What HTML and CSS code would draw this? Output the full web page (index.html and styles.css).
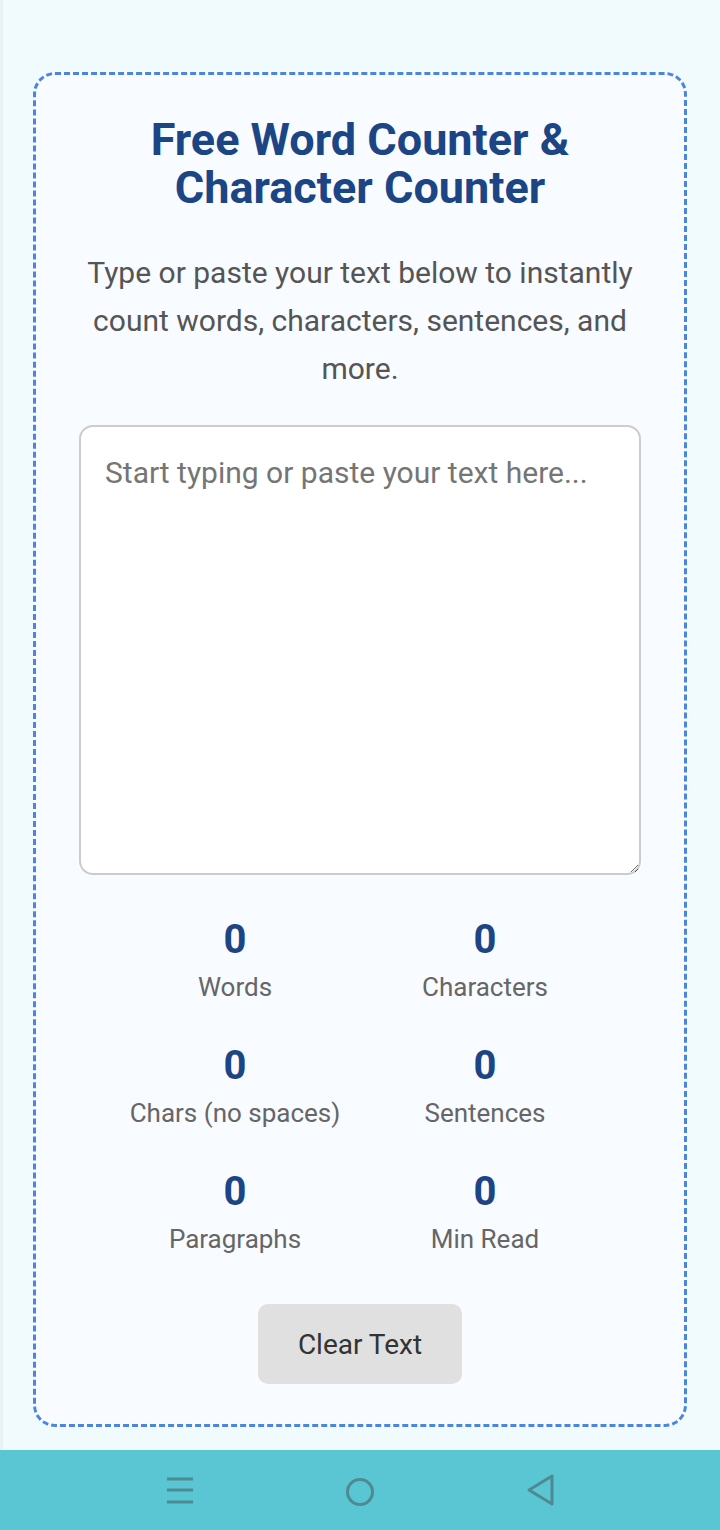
FILE: index.html
```html
<!DOCTYPE html>
<html lang="en">
<head>
  <meta charset="UTF-8">
  <title>Free Word Counter &amp; Character Counter</title>
  <meta name="viewport" content="width=device-width, initial-scale=1.0">
  <link rel="stylesheet" href="styles.css">
</head>
<body>

  <main class="page">
    <div class="counter-card">
      <h1>Free Word Counter &amp; Character Counter</h1>
      <p class="intro">Type or paste your text below to instantly count words, characters, sentences, and more.</p>

      <textarea id="textInput" placeholder="Start typing or paste your text here..."></textarea>

      <div class="stats">
        <div class="stat"><span class="stat-num" id="words">0</span><span class="stat-label">Words</span></div>
        <div class="stat"><span class="stat-num" id="chars">0</span><span class="stat-label">Characters</span></div>
        <div class="stat"><span class="stat-num" id="charsNoSpace">0</span><span class="stat-label">Chars (no spaces)</span></div>
        <div class="stat"><span class="stat-num" id="sentences">0</span><span class="stat-label">Sentences</span></div>
        <div class="stat"><span class="stat-num" id="paragraphs">0</span><span class="stat-label">Paragraphs</span></div>
        <div class="stat"><span class="stat-num" id="readTime">0</span><span class="stat-label">Min Read</span></div>
      </div>

      <button class="clear-btn" id="clearBtn">Clear Text</button>
    </div>
  </main>

  <nav class="sys-nav">
    <svg width="36" height="36" viewBox="0 0 36 36"><path d="M5 7h26M5 18h26M5 30h26" stroke="#4d8a91" stroke-width="3"/></svg>
    <svg width="36" height="36" viewBox="0 0 36 36"><circle cx="18" cy="20" r="12.5" fill="none" stroke="#4d8a91" stroke-width="3"/></svg>
    <svg width="36" height="36" viewBox="0 0 36 36"><path d="M30 4 L7 18 L30 32 Z" fill="none" stroke="#4d8a91" stroke-width="3" stroke-linejoin="round"/></svg>
  </nav>

  <script>
    const textInput = document.getElementById("textInput");

    function update() {
      const text = textInput.value;
      const words = text.trim() ? text.trim().split(/\s+/).length : 0;
      document.getElementById("words").textContent = words;
      document.getElementById("chars").textContent = text.length;
      document.getElementById("charsNoSpace").textContent = text.replace(/\s/g, "").length;
      document.getElementById("sentences").textContent = (text.match(/[^.!?]+[.!?]+/g) || []).length;
      document.getElementById("paragraphs").textContent = text.split(/\n+/).filter(p => p.trim()).length;
      document.getElementById("readTime").textContent = Math.ceil(words / 200);
    }

    textInput.addEventListener("input", update);
    document.getElementById("clearBtn").addEventListener("click", () => {
      textInput.value = "";
      update();
    });
  </script>

</body>
</html>
```

FILE: styles.css
```css
    :root {
      --bg: #f1fbfd;
      --card: #f8fbff;
      --dash: #4a86e0;
      --title: #1b4585;
      --text: #555555;
      --label: #666666;
      --nav: #5ac6d4;
    }

    body {
      font-family: Roboto, 'Noto Sans', sans-serif;
      background-color: var(--bg);
      margin: 0;
    }

    .page {
      padding: 72px 33px 23px 30px;
      border-left: 3px solid #e6f3f5;
    }

    .counter-card {
      background: var(--card);
      border: 3px dashed var(--dash);
      border-radius: 22px;
      padding: 41px 43px 40px;
      display: flex;
      flex-direction: column;
      align-items: center;
    }

    h1 {
      font-size: 45px;
      line-height: 48px;
      font-weight: 700;
      color: var(--title);
      text-align: center;
      margin: 0 0 37px;
    }

    .intro {
      font-size: 30px;
      line-height: 48px;
      color: var(--text);
      text-align: center;
      margin: 0 0 32px;
    }

    textarea {
      box-sizing: border-box;
      width: 100%;
      height: 450px;
      border: 2px solid #cccccc;
      border-radius: 14px;
      background: #ffffff;
      padding: 26px 24px;
      font-family: Roboto, 'Noto Sans', sans-serif;
      font-size: 30px;
      line-height: 40px;
      color: #333;
    }

    textarea::placeholder {
      color: #757575;
    }

    .stats {
      display: grid;
      grid-template-columns: repeat(2, 250px);
      justify-content: center;
      row-gap: 40px;
      margin-top: 41px;
    }

    .stat {
      display: flex;
      flex-direction: column;
      align-items: center;
      gap: 8px;
    }

    .stat-num {
      font-size: 40px;
      line-height: 48px;
      font-weight: 700;
      color: var(--title);
    }

    .stat-label {
      font-size: 26px;
      line-height: 30px;
      color: var(--label);
    }

    .clear-btn {
      margin-top: 50px;
      width: 204px;
      height: 80px;
      border: none;
      border-radius: 10px;
      background: #e0e0e0;
      font-family: Roboto, 'Noto Sans', sans-serif;
      font-size: 28px;
      color: #333333;
      cursor: pointer;
    }

    .sys-nav {
      height: 80px;
      background: var(--nav);
      display: flex;
      justify-content: center;
      align-items: center;
      gap: 144px;
    }
```
